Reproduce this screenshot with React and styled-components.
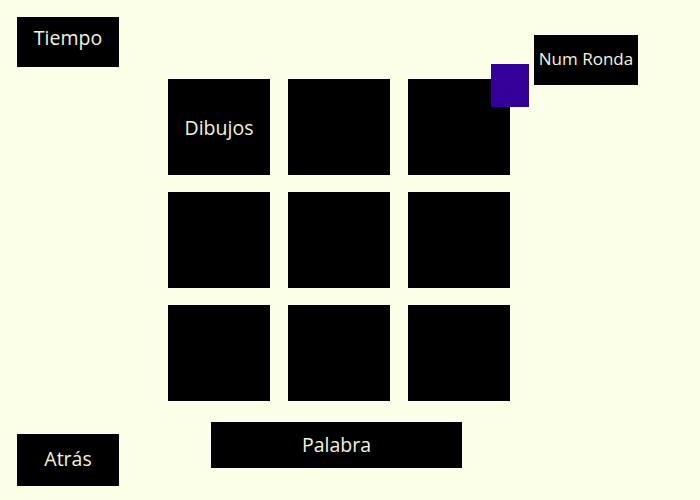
import styled, { createGlobalStyle } from 'styled-components';

const GlobalStyle = createGlobalStyle`
  body {
    margin: 0;
    background: #fbffe8;
    font-family: 'Open Sans', 'Noto Sans', sans-serif;
  }
`;

const Page = styled.div`
  display: flex;
  width: 700px;
  height: 500px;
  box-sizing: border-box;
  padding: 17px 0 14px 17px;
  background: #fbffe8;
`;

const SideColumn = styled.div`
  display: flex;
  flex-direction: column;
  justify-content: space-between;
  width: 102px;
`;

const Button = styled.div`
  display: flex;
  align-items: center;
  justify-content: center;
  box-sizing: border-box;
  width: ${(p) => p.$w}px;
  height: ${(p) => p.$h}px;
  padding-bottom: ${(p) => p.$lift || 0}px;
  background: #000;
  color: #f3f3dc;
  font-size: ${(p) => p.$size || 19.5}px;
  flex-shrink: 0;
`;

const CenterColumn = styled.div`
  display: flex;
  flex-direction: column;
  margin-left: 49px;
  padding-top: 62px;
  width: 342px;
`;

const Board = styled.div`
  display: grid;
  grid-template-columns: repeat(3, 102px);
  grid-auto-rows: 96px;
  column-gap: 18px;
  row-gap: 17px;
`;

const Tile = styled.div`
  position: relative;
  display: flex;
  align-items: center;
  justify-content: center;
  background: #000;
  color: #f3f3dc;
  font-size: 19.5px;
`;

const Marker = styled.div`
  position: absolute;
  top: -15px;
  right: -19px;
  width: 38px;
  height: 43px;
  background: #330099;
`;

const WordRow = styled.div`
  display: flex;
  margin-top: 21px;
  padding-left: 43px;
`;

const RightColumn = styled.div`
  margin-left: 24px;
  padding-top: 18px;
`;

const tiles = ['Dibujos', '', '', '', '', '', '', '', ''];

export default function App() {
  return (
    <>
      <GlobalStyle />
      <Page>
        <SideColumn>
          <Button $w={102} $h={50} $lift={9}>Tiempo</Button>
          <Button $w={102} $h={52} $lift={3}>Atrás</Button>
        </SideColumn>
        <CenterColumn>
          <Board>
            {tiles.map((t, i) => (
              <Tile key={i}>
                {t}
                {i === 2 && <Marker />}
              </Tile>
            ))}
          </Board>
          <WordRow>
            <Button $w={251} $h={46} $lift={2}>Palabra</Button>
          </WordRow>
        </CenterColumn>
        <RightColumn>
          <Button $w={104} $h={50} $size={17} $lift={3}>Num Ronda</Button>
        </RightColumn>
      </Page>
    </>
  );
}
